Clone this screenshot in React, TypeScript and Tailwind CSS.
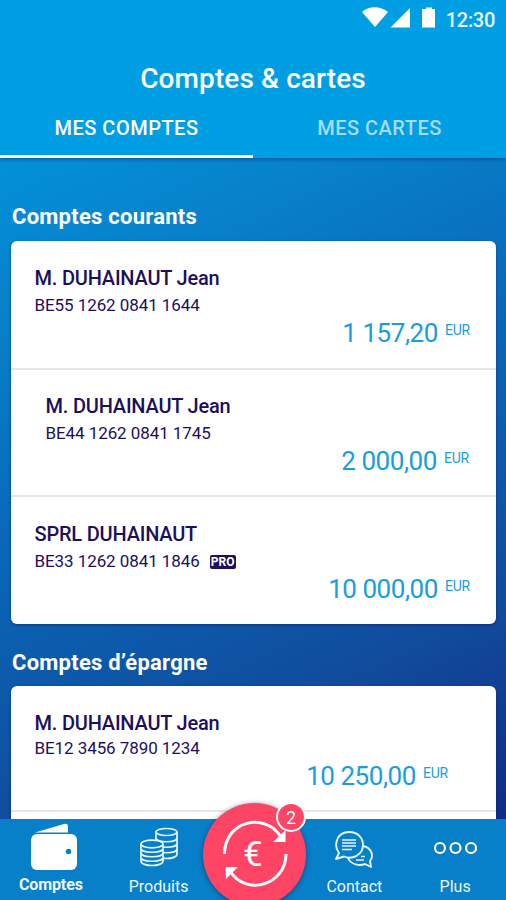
import clsx from 'clsx'
import type { ReactNode } from 'react'

type Account = {
  name: string
  iban: string
  amount: string
  pro?: boolean
  className: string
  infoClassName?: string
  ibanClassName: string
  amountClassName: string
}

const currentAccounts: Account[] = [
  {
    name: 'M. DUHAINAUT Jean',
    iban: 'BE55 1262 0841 1644',
    amount: '1 157,20',
    className: 'h-[127px] pt-[25px]',
    ibanClassName: 'mt-[5px]',
    amountClassName: 'pr-[26px]',
  },
  {
    name: 'M. DUHAINAUT Jean',
    iban: 'BE44 1262 0841 1745',
    amount: '2 000,00',
    className: 'h-[127px] border-t-2 border-[#e4e6ea] pt-[24px]',
    infoClassName: 'pl-[11px]',
    ibanClassName: 'mt-[5px]',
    amountClassName: 'pr-[27px]',
  },
  {
    name: 'SPRL DUHAINAUT',
    iban: 'BE33 1262 0841 1846',
    amount: '10 000,00',
    pro: true,
    className: 'h-[129px] border-t-2 border-[#e4e6ea] pt-[25px]',
    ibanClassName: 'mt-[5px]',
    amountClassName: 'pr-[26px]',
  },
]

const savingsAccounts: Account[] = [
  {
    name: 'M. DUHAINAUT Jean',
    iban: 'BE12 3456 7890 1234',
    amount: '10 250,00',
    className: 'h-[124px] pt-[25px]',
    ibanClassName: 'mt-[3px]',
    amountClassName: 'pr-[48px]',
  },
]

function StatusBar() {
  return (
    <div className="flex h-[36px] items-start justify-end pr-[11px] pt-[7px] text-white">
      <svg width="78" height="22" viewBox="0 0 78 22" fill="currentColor">
        <path d="M0 5C6-1.300 19-1.300 26 5L13 20Z" />
        <path d="M48 1V20.500H28.500Z" />
        <path d="M61 2h3V.5h6V2h3v18.500H60V2Z" />
      </svg>
      <span className="ml-[6px] mt-[2px] text-[20px] leading-[22px] font-medium tracking-[-0.3px] text-[#eaf8ff]">
        12:30
      </span>
    </div>
  )
}

function Header() {
  return (
    <header className="relative h-[158px] bg-[#009ee3] shadow-[0_2px_3px_rgba(0,50,110,0.45)]">
      <StatusBar />
      <h1 className="mt-[26px] text-center text-[28px] leading-[34px] font-medium tracking-[0.1px] text-white">
        Comptes &amp; cartes
      </h1>
      <div className="mt-[12px] grid h-[50px] grid-cols-2 text-center text-[20px] font-medium tracking-[0.5px]">
        <button className="border-b-[3px] border-white pb-[8px] text-white">MES COMPTES</button>
        <button className="border-b-[3px] border-transparent pb-[8px] text-[#a6dcf6]">MES CARTES</button>
      </div>
    </header>
  )
}

function AccountRow({ account }: { account: Account }) {
  return (
    <div className={clsx('pl-[23.500px] text-[#1c0f5c]', account.className)}>
      <div className={account.infoClassName}>
        <p className="text-[20px] leading-[24px] font-medium tracking-[-0.2px]">{account.name}</p>
        <div className={clsx('flex h-[22px] items-center', account.ibanClassName)}>
          <span className="text-[17px] tracking-[-0.080px]">{account.iban}</span>
          {account.pro && (
            <span className="ml-[10px] flex h-[14px] w-[26px] items-center justify-center rounded-[2px] bg-[#1c0f5c] text-[12px] leading-none font-bold text-white">
              PRO
            </span>
          )}
        </div>
      </div>
      <div className={clsx('flex h-[32px] justify-end text-[#1a9ddc]', account.amountClassName)}>
        <span className="text-[26px] leading-[33px] tracking-[-0.45px]">{account.amount}</span>
        <span className="ml-[7px] text-[14px] leading-[27px] tracking-[-0.2px]">EUR</span>
      </div>
    </div>
  )
}

function AccountCard({ accounts, children }: { accounts: Account[]; children?: ReactNode }) {
  return (
    <div className="w-[485px] shrink-0 overflow-hidden rounded-[6px] bg-white shadow-[0_1px_3px_rgba(0,20,90,0.5)]">
      {accounts.map((account) => (
        <AccountRow key={account.iban} account={account} />
      ))}
      {children}
    </div>
  )
}

function WalletIcon() {
  return (
    <svg width="48" height="48" viewBox="0 0 48 48" fill="white">
      <path d="M5 9.500 34 1Q38 0 38 4V9.500Z" />
      <rect x="1" y="11" width="46" height="36" rx="6" />
      <circle cx="38.500" cy="28.500" r="2.700" fill="#087fc9" />
    </svg>
  )
}

function CoinsIcon() {
  return (
    <svg width="40" height="40" viewBox="0 0 40 40" fill="#087fc9" stroke="#e8f6ff" strokeWidth="1.700">
      <path d="M17 5V27C17 33 38 33 38 27V5" />
      <path d="M17 11C17 16 38 16 38 11M17 16.500C17 21.500 38 21.500 38 16.500M17 22C17 27 38 27 38 22" />
      <ellipse cx="27.500" cy="5" rx="10.500" ry="3.500" />
      <path d="M2 17V34C2 40 24 40 24 34V17" />
      <path d="M2 21.500C2 26.500 24 26.500 24 21.500M2 26C2 31 24 31 24 26M2 30.500C2 35.500 24 35.500 24 30.500" />
      <ellipse cx="13" cy="17" rx="11" ry="3.800" />
    </svg>
  )
}

function ContactIcon() {
  return (
    <svg
      width="40"
      height="40"
      viewBox="0 0 40 40"
      fill="#087fc9"
      stroke="#e8f6ff"
      strokeWidth="1.900"
      strokeLinejoin="round"
    >
      <path d="M14 28C17 35 26 36 31 34L37 37 36 31C40 26 38 18 29 16" />
      <path d="M22 30H30M27 26.500H31" strokeWidth="1.500" />
      <path d="M5 23C-1 15 3 2 15 2 24 2 29 8 29 15 29 25 18 30 10 26.500L2 29Z" />
      <path d="M8 10H22M8 13H22M8 16H22M8 19.500H18" strokeWidth="1.700" />
    </svg>
  )
}

function MoreIcon() {
  return (
    <svg width="44" height="14" viewBox="0 0 44 14" fill="none" stroke="white" strokeWidth="2.200">
      <circle cx="7" cy="7" r="5" />
      <circle cx="22.500" cy="7" r="5" />
      <circle cx="38" cy="7" r="5" />
    </svg>
  )
}

function TransferButton() {
  return (
    <button className="absolute -top-[16px] left-[203px] h-[103px] w-[103px] rounded-full bg-[#fe4565] shadow-[0_1px_5px_rgba(20,30,80,0.6)]">
      <svg width="103" height="103" viewBox="0 0 103 103" fill="none" stroke="white" strokeWidth="3">
        <path d="M21.500 51C21.500 18 62 8 78 34" />
        <path d="M83 51C83 82 43 94 27 68" />
        <path d="M82.500 27V39H70Z" fill="white" stroke="none" />
        <path d="M22.500 64H35L23 76Z" fill="white" stroke="none" />
      </svg>
      <span className="absolute top-[33px] left-[40px] text-[35px] leading-[38px] text-white">€</span>
      <span className="absolute -top-[1px] left-[73px] flex h-[30px] w-[30px] items-center justify-center rounded-full border-2 border-white bg-[#fe4565] text-[18px] text-white">
        2
      </span>
    </button>
  )
}

function NavItem({ label, className, children }: { label: string; className?: string; children: ReactNode }) {
  return (
    <button className={clsx('flex flex-col items-center', className)}>
      {children}
      <span className="leading-[20px]">{label}</span>
    </button>
  )
}

function BottomNav() {
  return (
    <nav className="relative flex h-[81px] shrink-0 bg-[#087fc9] text-[16px] text-[#f0f8ff]">
      <NavItem label="Comptes" className="w-[102px] gap-[4px] pt-[4px] font-bold tracking-[-0.1px]">
        <div className="pl-[6px]">
          <WalletIcon />
        </div>
      </NavItem>
      <NavItem label="Produits" className="w-[114px] gap-[10px] pt-[8px]">
        <CoinsIcon />
      </NavItem>
      <TransferButton />
      <NavItem label="Contact" className="ml-[89px] w-[100px] gap-[7px] pt-[11px]">
        <ContactIcon />
      </NavItem>
      <NavItem label="Plus" className="w-[102px] gap-[22px] pt-[22px]">
        <MoreIcon />
      </NavItem>
    </nav>
  )
}

export default function App() {
  return (
    <div className="flex h-[900px] w-[506px] flex-col overflow-hidden bg-[linear-gradient(155deg,#0098df_8%,#0881ca_28%,#0968b8_48%,#114b9c_74%,#102080_100%)] font-['Roboto',sans-serif]">
      <Header />
      <main className="flex min-h-0 flex-1 flex-col overflow-hidden px-[11px] pt-[45px]">
        <h2 className="pb-[10px] pl-px text-[22px] leading-[28px] font-bold tracking-[0.25px] text-white">
          Comptes courants
        </h2>
        <AccountCard accounts={currentAccounts} />
        <h2 className="pt-[25px] pb-[9px] pl-px text-[22px] leading-[28px] font-bold tracking-[0.25px] text-white">
          Comptes d’épargne
        </h2>
        <AccountCard accounts={savingsAccounts}>
          <div className="h-[20px] border-t-2 border-[#e4e6ea]" />
        </AccountCard>
      </main>
      <BottomNav />
    </div>
  )
}
